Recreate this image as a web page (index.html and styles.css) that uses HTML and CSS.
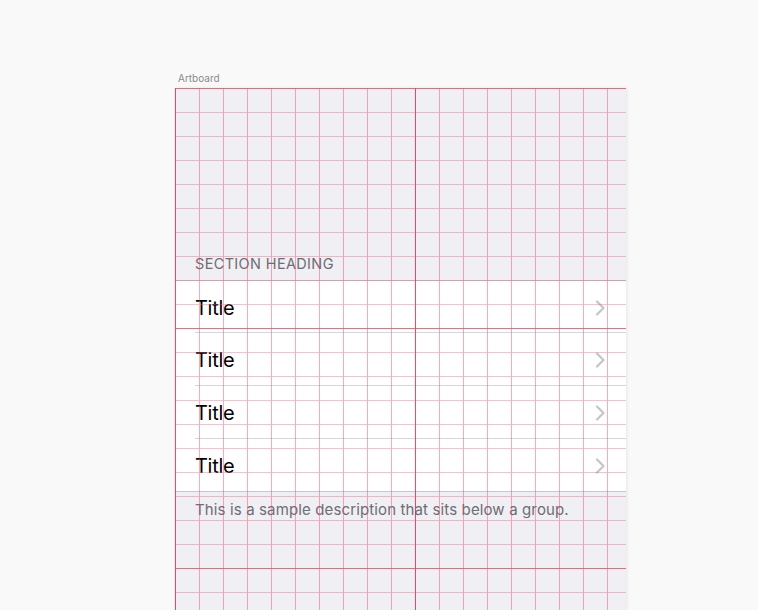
FILE: index.html
```html
<!DOCTYPE html>
<html>
<head>
<meta charset="utf-8">
<link rel="stylesheet" href="styles.css">
</head>
<body>
<div class="stage">
  <div class="label">Artboard</div>
  <div class="artboard">
    <div class="heading">SECTION HEADING</div>
    <div class="group">
      <div class="row"><span class="title">Title</span><svg class="chev" width="10" height="16" viewBox="0 0 10 16"><path d="M2 1.5 L8.5 8 L2 14.5" fill="none" stroke="#c4c4c9" stroke-width="2.2" stroke-linecap="round" stroke-linejoin="round"/></svg></div>
      <div class="row"><span class="title">Title</span><svg class="chev" width="10" height="16" viewBox="0 0 10 16"><path d="M2 1.5 L8.5 8 L2 14.5" fill="none" stroke="#c4c4c9" stroke-width="2.2" stroke-linecap="round" stroke-linejoin="round"/></svg></div>
      <div class="row"><span class="title">Title</span><svg class="chev" width="10" height="16" viewBox="0 0 10 16"><path d="M2 1.5 L8.5 8 L2 14.5" fill="none" stroke="#c4c4c9" stroke-width="2.2" stroke-linecap="round" stroke-linejoin="round"/></svg></div>
      <div class="row"><span class="title">Title</span><svg class="chev" width="10" height="16" viewBox="0 0 10 16"><path d="M2 1.5 L8.5 8 L2 14.5" fill="none" stroke="#c4c4c9" stroke-width="2.2" stroke-linecap="round" stroke-linejoin="round"/></svg></div>
    </div>
    <div class="desc">This is a sample description that sits below a group.</div>
    <svg class="grid" width="451" height="522" shape-rendering="crispEdges">
      <defs>
        <pattern id="minor" width="24" height="24" patternUnits="userSpaceOnUse">
          <rect x="0" y="0" width="1" height="24" fill="#ff3060" fill-opacity="0.42"/>
          <rect x="1" y="0" width="23" height="1" fill="#f0607a" fill-opacity="0.4"/>
        </pattern>
        <pattern id="major" width="240" height="240" patternUnits="userSpaceOnUse">
          <rect x="0" y="0" width="1" height="240" fill="#ff1030" fill-opacity="0.65"/>
          <rect x="1" y="0" width="239" height="1" fill="#e0384a" fill-opacity="0.6"/>
        </pattern>
      </defs>
      <rect width="451" height="522" fill="url(#minor)"/>
      <rect width="451" height="522" fill="url(#major)"/>
    </svg>
  </div>
</div>
</body>
</html>
```
FILE: styles.css
```css
html, body {
  margin: 0;
  padding: 0;
  background: #f9f9f9;
  overflow: hidden;
  height: 610px;
}
body {
  font-family: Inter, "Helvetica Neue", Arial, sans-serif;
}
.stage {
  padding: 72px 0 0 175px;
}
.label {
  font-size: 10px;
  line-height: 13px;
  color: #8a8a8a;
  padding-left: 3px;
  margin-bottom: 3px;
}
.artboard {
  position: relative;
  width: 451px;
  height: 522px;
  background: #efeff4;
  box-shadow: 1px 0 3px rgba(0,0,0,0.08);
}
.heading {
  height: 192px;
  box-sizing: border-box;
  display: flex;
  align-items: flex-end;
  padding: 0 0 8px 20px;
  font-size: 14.5px;
  line-height: 17px;
  color: #6d6d72;
  letter-spacing: 0.35px;
}
.group {
  background: #fff;
  border-top: 1px solid #c8c7cc;
  border-bottom: 1px solid #c8c7cc;
}
.row {
  height: 53px;
  box-sizing: border-box;
  margin-left: 20px;
  padding-right: 21px;
  padding-top: 2px;
  display: flex;
  align-items: center;
  justify-content: space-between;
  border-bottom: 1px solid #d6d6da;
}
.row:first-child { height: 52px; }
.row:last-child { border-bottom: none; height: 52px; }
.title {
  font-size: 20px;
  color: #000;
  letter-spacing: -0.3px;
}
.chev {
  display: block;
}
.desc {
  padding: 9px 0 0 20px;
  font-size: 15px;
  line-height: 18px;
  color: #6d6d72;
  letter-spacing: 0.13px;
}
.grid {
  position: absolute;
  left: 0;
  top: 0;
  pointer-events: none;
  display: block;
}
```
